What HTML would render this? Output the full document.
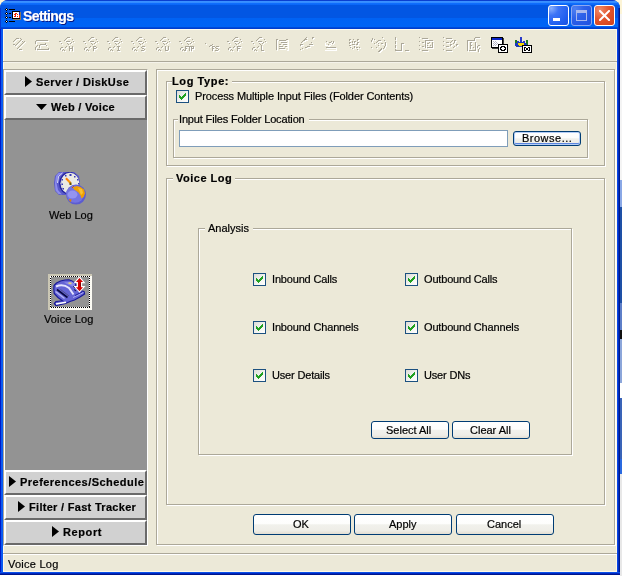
<!DOCTYPE html>
<html><head><meta charset="utf-8">
<style>
*{margin:0;padding:0;box-sizing:border-box}
html,body{width:622px;height:576px;overflow:hidden;background:#fff}
body{position:relative;font-family:"Liberation Sans",sans-serif;font-size:11px;color:#000;-webkit-text-stroke-width:0.2px}
.a{position:absolute}
.t{position:absolute;white-space:nowrap;line-height:15px;font-size:11px;will-change:transform}
.b{font-weight:bold}
.etch{position:absolute;border:1px solid #ACA899;box-shadow:inset 1px 1px 0 #fff,1px 1px 0 #fff}
.lbl{position:absolute;background:#ECE9D8;white-space:nowrap;line-height:15px;will-change:transform}
.btn{position:absolute;border:1px solid #003C74;border-radius:3px;background:linear-gradient(#fff 0%,#fdfdfc 45%,#f1f1ec 52%,#eeede7 82%,#e2ded2 100%);text-align:center;line-height:13px}
.cb{position:absolute;width:13px;height:13px;border:1px solid #1C5180;background:linear-gradient(135deg,#dcdcd7 0%,#f5f5f2 60%,#fff 100%)}
.cb svg{position:absolute;left:2px;top:2px}
.lb{position:absolute;left:4px;width:143px;height:25px;background:#D1D1D1;border-top:2px solid #fff;border-left:2px solid #fff;border-right:2px solid #6A6A6A;border-bottom:2px solid #6A6A6A;font-weight:bold}
.tb{position:absolute;top:36px;width:17px;height:17px}
</style></head><body>
<!-- outside background -->
<div class="a" style="left:0;top:0;width:622px;height:576px;background:#fff"></div>
<div class="a" style="left:0;top:0;width:14px;height:14px;background:#FCF4D6"></div>
<div class="a" style="left:606px;top:0;width:16px;height:14px;background:#FCF4D6"></div>
<!-- right strip outside window -->
<div class="a" style="left:620px;top:14px;width:2px;height:166px;background:#F4F4F4"></div>
<div class="a" style="left:620px;top:180px;width:2px;height:27px;background:#8AA8E6"></div>
<div class="a" style="left:620px;top:207px;width:2px;height:96px;background:#1E50A6"></div>
<div class="a" style="left:620px;top:303px;width:2px;height:27px;background:#5E7FC8"></div>
<div class="a" style="left:620px;top:330px;width:2px;height:9px;background:#101010"></div>
<div class="a" style="left:620px;top:339px;width:2px;height:44px;background:#8CA6DA"></div>
<div class="a" style="left:620px;top:383px;width:2px;height:15px;background:#FFFFFF"></div>
<div class="a" style="left:620px;top:398px;width:2px;height:61px;background:#3A64B8"></div>
<div class="a" style="left:620px;top:459px;width:2px;height:15px;background:#2A6AE0"></div>
<div class="a" style="left:620px;top:474px;width:2px;height:102px;background:#E8E8E8"></div>

<!-- window frame -->
<div class="a" style="left:0;top:0;width:620px;height:575px;border-radius:8px 8px 0 0;background:#0A4BE0;overflow:hidden">
  <div class="a" style="left:0;top:0;width:620px;height:29px;background:linear-gradient(#0A3FD0 0px,#0A3FD0 1px,#3D93FF 1px,#3189FF 3px,#1170FF 3px,#0865F5 5px,#0256E3 5px,#0256E3 18px,#0062F4 18px,#0064F6 27px,#0050E0 27px,#0037C8 29px)"></div>
  <div class="a" style="left:0;top:29px;width:1px;height:546px;background:#0019C8"></div>
  <div class="a" style="left:1px;top:29px;width:2px;height:546px;background:#0A5AF0"></div>
  <div class="a" style="left:0;top:8px;width:1px;height:21px;background:#0838D0"></div>
  <div class="a" style="left:617px;top:29px;width:1px;height:546px;background:#0A45E5"></div>
  <div class="a" style="left:618px;top:8px;width:1px;height:567px;background:#0030C0"></div>
  <div class="a" style="left:619px;top:8px;width:1px;height:567px;background:#00188C"></div>
  <div class="a" style="left:0;top:572px;width:620px;height:1px;background:#0A50E8"></div>
  <div class="a" style="left:0;top:573px;width:620px;height:1px;background:#0028C0"></div>
  <div class="a" style="left:0;top:574px;width:620px;height:1px;background:#00158A"></div>
</div>

<!-- client area -->
<div class="a" style="left:3px;top:29px;width:614px;height:543px;background:#ECE9D8">
  <div class="a" style="left:0;top:0;width:614px;height:1px;background:#FFFCF2"></div>
  <div class="a" style="left:0;top:0;width:1px;height:543px;background:#FFF8E6"></div>
  <div class="a" style="left:613px;top:0;width:1px;height:543px;background:#FFF8E6"></div>
  <div class="a" style="left:0;top:542px;width:614px;height:1px;background:#FFF8E6"></div>
</div>

<!-- title -->
<svg class="a" style="left:0;top:0" width="24" height="26" shape-rendering="crispEdges">
<g fill="#000"><path d="M6 8h1v1h-1zM5 9h1v1h-1zM7 9h1v1h-1zM6 10h1v1h-1z"/><path d="M6 12h1v1h-1zM5 13h1v1h-1zM7 13h1v1h-1zM6 14h1v1h-1z"/><path d="M6 16h1v1h-1zM5 17h1v1h-1zM7 17h1v1h-1zM6 18h1v1h-1z"/><path d="M6 20h1v1h-1zM5 21h1v1h-1zM7 21h1v1h-1zM6 22h1v1h-1z"/>
<rect x="9" y="9" width="6" height="1"/><rect x="9" y="13" width="2" height="1"/><rect x="9" y="17" width="2" height="1"/><rect x="9" y="21" width="6" height="1"/></g>
<g fill="#fff"><rect x="6" y="9" width="1" height="1"/><rect x="6" y="13" width="1" height="1"/><rect x="6" y="17" width="1" height="1"/><rect x="6" y="21" width="1" height="1"/></g>
<rect x="13" y="12" width="8" height="8" fill="#8A7A60"/>
<rect x="12" y="11" width="8" height="8" fill="#000"/>
<rect x="13" y="12" width="6" height="6" fill="#fff"/>
<rect x="19" y="12" width="1" height="3" fill="#1020B0"/><rect x="19" y="15" width="1" height="3" fill="#FF3000"/>
<g fill="#F02000"><rect x="14" y="14" width="2" height="1"/><rect x="15" y="13" width="2" height="1"/><rect x="17" y="14" width="1" height="1"/><rect x="15" y="15" width="1" height="2"/><rect x="17" y="16" width="1" height="1"/><rect x="14" y="16" width="1" height="1"/></g>
</svg>
<div class="t b" style="left:23px;top:8px;font-size:14px;line-height:16px;letter-spacing:-0.6px;color:#fff;text-shadow:1px 1px 0 #0A1883">Settings</div>

<!-- window buttons -->
<div class="a" style="left:548px;top:5px;width:21px;height:21px;border:1px solid #fff;border-radius:3px;background:radial-gradient(circle at 12% 12%,#8AB0FC 0%,#3D74F6 30%,#2260F0 70%,#1A50E0 100%)">
  <div class="a" style="left:4px;top:12px;width:7px;height:3px;background:#fff"></div>
</div>
<div class="a" style="left:571px;top:5px;width:21px;height:21px;border:1px solid #8CA8F2;border-radius:3px;background:radial-gradient(circle at 15% 15%,#4E80F2 0%,#2E62EA 40%,#2050E0 100%)">
  <div class="a" style="left:4px;top:4px;width:11px;height:11px;border:1px solid #A8B8EE;border-top-width:3px"></div>
</div>
<div class="a" style="left:594px;top:5px;width:21px;height:21px;border:1px solid #fff;border-radius:3px;background:radial-gradient(circle at 25% 20%,#F08C6A 0%,#E2552E 45%,#D0401A 100%)">
  <svg class="a" style="left:4px;top:4px" width="11" height="11" viewBox="0 0 11 11"><path d="M1 1L10 10M10 1L1 10" stroke="#fff" stroke-width="2" stroke-linecap="square"/></svg>
</div>

<svg class="a" style="left:0;top:0" width="622" height="62" shape-rendering="crispEdges"><path fill="#fff" d="M68 38h3v1h-3zM92 38h3v1h-3zM116 38h3v1h-3zM140 38h3v1h-3zM164 38h3v1h-3zM188 38h3v1h-3zM236 38h3v1h-3zM260 38h3v1h-3zM307 38h1v1h-1zM313 38h2v1h-2zM383 38h1v1h-1zM396 38h1v1h-1zM420 38h1v1h-1zM444 38h1v1h-1zM476 38h5v1h-5zM17 39h3v1h-3zM67 39h1v1h-1zM91 39h1v1h-1zM115 39h1v1h-1zM139 39h1v1h-1zM163 39h1v1h-1zM187 39h1v1h-1zM235 39h1v1h-1zM259 39h1v1h-1zM313 39h1v1h-1zM373 39h1v1h-1zM396 39h1v1h-1zM423 39h6v1h-6zM447 39h6v1h-6zM475 39h1v1h-1zM16 40h1v1h-1zM22 40h1v1h-1zM66 40h1v1h-1zM73 40h1v1h-1zM90 40h1v1h-1zM97 40h1v1h-1zM114 40h1v1h-1zM121 40h1v1h-1zM138 40h1v1h-1zM145 40h1v1h-1zM162 40h1v1h-1zM169 40h1v1h-1zM186 40h1v1h-1zM193 40h1v1h-1zM234 40h1v1h-1zM241 40h1v1h-1zM258 40h1v1h-1zM265 40h1v1h-1zM277 40h2v1h-2zM287 40h2v1h-2zM305 40h3v1h-3zM350 40h2v1h-2zM354 40h1v1h-1zM358 40h2v1h-2zM373 40h1v1h-1zM375 40h1v1h-1zM396 40h1v1h-1zM475 40h1v1h-1zM15 41h1v1h-1zM21 41h1v1h-1zM37 41h12v1h-12zM65 41h1v1h-1zM89 41h1v1h-1zM113 41h1v1h-1zM137 41h1v1h-1zM161 41h1v1h-1zM185 41h1v1h-1zM233 41h1v1h-1zM257 41h1v1h-1zM277 41h1v1h-1zM280 41h7v1h-7zM288 41h1v1h-1zM304 41h2v1h-2zM350 41h1v1h-1zM358 41h1v1h-1zM372 41h1v1h-1zM379 41h3v1h-3zM385 41h1v1h-1zM426 41h8v1h-8zM453 41h1v1h-1zM455 41h2v1h-2zM468 41h8v1h-8zM14 42h1v1h-1zM20 42h1v1h-1zM25 42h1v1h-1zM36 42h1v1h-1zM60 42h2v1h-2zM67 42h4v1h-4zM74 42h1v1h-1zM84 42h2v1h-2zM91 42h4v1h-4zM98 42h1v1h-1zM108 42h2v1h-2zM115 42h4v1h-4zM122 42h1v1h-1zM132 42h2v1h-2zM139 42h4v1h-4zM146 42h1v1h-1zM156 42h2v1h-2zM163 42h4v1h-4zM170 42h1v1h-1zM180 42h2v1h-2zM187 42h4v1h-4zM194 42h1v1h-1zM228 42h2v1h-2zM235 42h4v1h-4zM242 42h1v1h-1zM252 42h2v1h-2zM259 42h4v1h-4zM266 42h1v1h-1zM277 42h1v1h-1zM288 42h1v1h-1zM303 42h1v1h-1zM327 42h1v1h-1zM332 42h1v1h-1zM334 42h1v1h-1zM353 42h1v1h-1zM355 42h2v1h-2zM372 42h1v1h-1zM378 42h1v1h-1zM396 42h1v1h-1zM420 42h1v1h-1zM426 42h1v1h-1zM444 42h1v1h-1zM452 42h1v1h-1zM455 42h1v1h-1zM468 42h1v1h-1zM19 43h1v1h-1zM24 43h1v1h-1zM36 43h1v1h-1zM72 43h1v1h-1zM96 43h1v1h-1zM120 43h1v1h-1zM144 43h1v1h-1zM168 43h1v1h-1zM192 43h1v1h-1zM240 43h1v1h-1zM264 43h1v1h-1zM277 43h1v1h-1zM282 43h7v1h-7zM302 43h1v1h-1zM312 43h1v1h-1zM325 43h1v1h-1zM330 43h2v1h-2zM334 43h1v1h-1zM350 43h2v1h-2zM353 43h1v1h-1zM355 43h1v1h-1zM358 43h2v1h-2zM377 43h1v1h-1zM386 43h1v1h-1zM396 43h1v1h-1zM423 43h2v1h-2zM426 43h1v1h-1zM430 43h1v1h-1zM433 43h1v1h-1zM447 43h3v1h-3zM451 43h1v1h-1zM455 43h1v1h-1zM468 43h1v1h-1zM471 43h2v1h-2zM476 43h1v1h-1zM18 44h1v1h-1zM23 44h1v1h-1zM36 44h1v1h-1zM46 44h1v1h-1zM62 44h1v1h-1zM71 44h1v1h-1zM86 44h1v1h-1zM95 44h1v1h-1zM110 44h1v1h-1zM119 44h1v1h-1zM134 44h1v1h-1zM143 44h1v1h-1zM158 44h1v1h-1zM167 44h1v1h-1zM182 44h1v1h-1zM191 44h1v1h-1zM206 44h1v1h-1zM230 44h1v1h-1zM239 44h1v1h-1zM254 44h1v1h-1zM263 44h1v1h-1zM277 44h1v1h-1zM288 44h1v1h-1zM325 44h1v1h-1zM331 44h1v1h-1zM333 44h1v1h-1zM350 44h1v1h-1zM358 44h1v1h-1zM375 44h1v1h-1zM379 44h1v1h-1zM382 44h2v1h-2zM386 44h1v1h-1zM396 44h1v1h-1zM402 44h3v1h-3zM426 44h1v1h-1zM428 44h2v1h-2zM433 44h1v1h-1zM454 44h1v1h-1zM468 44h1v1h-1zM471 44h1v1h-1zM476 44h1v1h-1zM14 45h1v1h-1zM17 45h1v1h-1zM22 45h1v1h-1zM41 45h5v1h-5zM69 45h1v1h-1zM93 45h1v1h-1zM117 45h1v1h-1zM141 45h1v1h-1zM165 45h1v1h-1zM189 45h1v1h-1zM213 45h1v1h-1zM237 45h1v1h-1zM277 45h1v1h-1zM280 45h2v1h-2zM284 45h5v1h-5zM301 45h3v1h-3zM310 45h4v1h-4zM325 45h3v1h-3zM329 45h2v1h-2zM353 45h3v1h-3zM357 45h2v1h-2zM386 45h1v1h-1zM402 45h1v1h-1zM426 45h1v1h-1zM433 45h1v1h-1zM451 45h2v1h-2zM457 45h2v1h-2zM468 45h1v1h-1zM476 45h1v1h-1zM16 46h1v1h-1zM21 46h1v1h-1zM38 46h1v1h-1zM40 46h1v1h-1zM47 46h1v1h-1zM211 46h1v1h-1zM262 46h1v1h-1zM277 46h1v1h-1zM288 46h1v1h-1zM301 46h1v1h-1zM328 46h2v1h-2zM350 46h2v1h-2zM379 46h1v1h-1zM386 46h1v1h-1zM396 46h1v1h-1zM402 46h1v1h-1zM420 46h1v1h-1zM426 46h1v1h-1zM428 46h1v1h-1zM431 46h1v1h-1zM433 46h1v1h-1zM444 46h1v1h-1zM451 46h1v1h-1zM457 46h1v1h-1zM468 46h1v1h-1zM471 46h2v1h-2zM476 46h1v1h-1zM479 46h2v1h-2zM20 47h1v1h-1zM37 47h1v1h-1zM40 47h1v1h-1zM67 47h1v1h-1zM70 47h1v1h-1zM73 47h1v1h-1zM91 47h1v1h-1zM94 47h2v1h-2zM115 47h1v1h-1zM119 47h2v1h-2zM139 47h1v1h-1zM143 47h3v1h-3zM163 47h1v1h-1zM166 47h1v1h-1zM169 47h1v1h-1zM186 47h3v1h-3zM190 47h1v1h-1zM192 47h1v1h-1zM194 47h1v1h-1zM210 47h1v1h-1zM213 47h2v1h-2zM217 47h3v1h-3zM235 47h1v1h-1zM238 47h4v1h-4zM259 47h1v1h-1zM262 47h1v1h-1zM277 47h1v1h-1zM280 47h4v1h-4zM286 47h3v1h-3zM308 47h3v1h-3zM355 47h1v1h-1zM385 47h1v1h-1zM396 47h1v1h-1zM402 47h1v1h-1zM423 47h2v1h-2zM426 47h1v1h-1zM433 47h1v1h-1zM447 47h3v1h-3zM455 47h1v1h-1zM468 47h1v1h-1zM471 47h1v1h-1zM476 47h1v1h-1zM478 47h1v1h-1zM19 48h1v1h-1zM36 48h1v1h-1zM40 48h1v1h-1zM62 48h2v1h-2zM66 48h1v1h-1zM73 48h1v1h-1zM86 48h2v1h-2zM90 48h1v1h-1zM97 48h1v1h-1zM110 48h2v1h-2zM114 48h1v1h-1zM119 48h1v1h-1zM134 48h2v1h-2zM138 48h1v1h-1zM158 48h2v1h-2zM162 48h1v1h-1zM166 48h1v1h-1zM169 48h1v1h-1zM182 48h2v1h-2zM190 48h1v1h-1zM194 48h1v1h-1zM230 48h2v1h-2zM234 48h1v1h-1zM254 48h2v1h-2zM258 48h1v1h-1zM262 48h1v1h-1zM277 48h1v1h-1zM288 48h1v1h-1zM306 48h2v1h-2zM327 48h10v1h-10zM351 48h1v1h-1zM355 48h1v1h-1zM357 48h2v1h-2zM360 48h1v1h-1zM372 48h1v1h-1zM377 48h1v1h-1zM385 48h1v1h-1zM396 48h1v1h-1zM402 48h1v1h-1zM426 48h1v1h-1zM428 48h6v1h-6zM454 48h1v1h-1zM468 48h1v1h-1zM471 48h1v1h-1zM474 48h1v1h-1zM476 48h1v1h-1zM478 48h1v1h-1zM18 49h1v1h-1zM36 49h1v1h-1zM49 49h1v1h-1zM61 49h1v1h-1zM70 49h2v1h-2zM73 49h1v1h-1zM85 49h1v1h-1zM94 49h3v1h-3zM109 49h1v1h-1zM119 49h1v1h-1zM133 49h1v1h-1zM143 49h1v1h-1zM157 49h1v1h-1zM166 49h1v1h-1zM169 49h1v1h-1zM181 49h1v1h-1zM186 49h2v1h-2zM190 49h1v1h-1zM192 49h3v1h-3zM213 49h2v1h-2zM217 49h1v1h-1zM229 49h1v1h-1zM238 49h3v1h-3zM253 49h1v1h-1zM262 49h1v1h-1zM277 49h1v1h-1zM280 49h6v1h-6zM288 49h1v1h-1zM303 49h1v1h-1zM336 49h1v1h-1zM353 49h1v1h-1zM382 49h1v1h-1zM384 49h1v1h-1zM402 49h1v1h-1zM468 49h1v1h-1zM471 49h1v1h-1zM476 49h1v1h-1zM480 49h1v1h-1zM20 50h3v1h-3zM36 50h1v1h-1zM38 50h12v1h-12zM61 50h1v1h-1zM70 50h1v1h-1zM73 50h1v1h-1zM85 50h1v1h-1zM94 50h1v1h-1zM109 50h1v1h-1zM133 50h1v1h-1zM145 50h1v1h-1zM157 50h1v1h-1zM169 50h1v1h-1zM181 50h1v1h-1zM186 50h1v1h-1zM190 50h1v1h-1zM192 50h1v1h-1zM213 50h1v1h-1zM219 50h1v1h-1zM229 50h1v1h-1zM238 50h1v1h-1zM253 50h1v1h-1zM277 50h1v1h-1zM287 50h2v1h-2zM301 50h1v1h-1zM325 50h12v1h-12zM358 50h1v1h-1zM381 50h2v1h-2zM402 50h1v1h-1zM420 50h1v1h-1zM444 50h1v1h-1zM468 50h1v1h-1zM476 50h1v1h-1zM479 50h1v1h-1zM63 51h1v1h-1zM65 51h1v1h-1zM70 51h1v1h-1zM73 51h1v1h-1zM87 51h1v1h-1zM89 51h1v1h-1zM94 51h1v1h-1zM111 51h1v1h-1zM113 51h1v1h-1zM118 51h3v1h-3zM135 51h1v1h-1zM137 51h1v1h-1zM142 51h3v1h-3zM159 51h1v1h-1zM161 51h1v1h-1zM166 51h3v1h-3zM183 51h1v1h-1zM185 51h2v1h-2zM190 51h1v1h-1zM192 51h1v1h-1zM213 51h1v1h-1zM216 51h3v1h-3zM231 51h1v1h-1zM233 51h1v1h-1zM238 51h1v1h-1zM255 51h1v1h-1zM257 51h1v1h-1zM262 51h3v1h-3zM380 51h2v1h-2zM396 51h7v1h-7zM406 51h4v1h-4zM423 51h6v1h-6zM447 51h6v1h-6zM468 51h1v1h-1zM470 51h7v1h-7zM479 51h1v1h-1zM379 52h2v1h-2zM479 52h1v1h-1z"/><path fill="#ACA899" d="M67 37h3v1h-3zM91 37h3v1h-3zM115 37h3v1h-3zM139 37h3v1h-3zM163 37h3v1h-3zM187 37h3v1h-3zM235 37h3v1h-3zM259 37h3v1h-3zM306 37h1v1h-1zM312 37h2v1h-2zM382 37h1v1h-1zM395 37h1v1h-1zM419 37h1v1h-1zM443 37h1v1h-1zM475 37h5v1h-5zM16 38h3v1h-3zM20 38h1v1h-1zM66 38h1v1h-1zM90 38h1v1h-1zM114 38h1v1h-1zM138 38h1v1h-1zM162 38h1v1h-1zM186 38h1v1h-1zM234 38h1v1h-1zM258 38h1v1h-1zM305 38h1v1h-1zM312 38h1v1h-1zM372 38h1v1h-1zM395 38h1v1h-1zM422 38h6v1h-6zM446 38h6v1h-6zM474 38h1v1h-1zM15 39h1v1h-1zM21 39h1v1h-1zM65 39h1v1h-1zM72 39h1v1h-1zM89 39h1v1h-1zM96 39h1v1h-1zM113 39h1v1h-1zM120 39h1v1h-1zM137 39h1v1h-1zM144 39h1v1h-1zM161 39h1v1h-1zM168 39h1v1h-1zM185 39h1v1h-1zM192 39h1v1h-1zM233 39h1v1h-1zM240 39h1v1h-1zM257 39h1v1h-1zM264 39h1v1h-1zM276 39h2v1h-2zM286 39h2v1h-2zM304 39h3v1h-3zM349 39h2v1h-2zM353 39h1v1h-1zM357 39h2v1h-2zM372 39h1v1h-1zM374 39h1v1h-1zM395 39h1v1h-1zM474 39h1v1h-1zM14 40h1v1h-1zM20 40h1v1h-1zM36 40h12v1h-12zM64 40h1v1h-1zM88 40h1v1h-1zM112 40h1v1h-1zM136 40h1v1h-1zM160 40h1v1h-1zM184 40h1v1h-1zM232 40h1v1h-1zM256 40h1v1h-1zM276 40h1v1h-1zM279 40h7v1h-7zM303 40h2v1h-2zM349 40h1v1h-1zM357 40h1v1h-1zM371 40h1v1h-1zM378 40h3v1h-3zM384 40h1v1h-1zM425 40h8v1h-8zM452 40h1v1h-1zM454 40h2v1h-2zM467 40h8v1h-8zM13 41h1v1h-1zM19 41h1v1h-1zM22 41h1v1h-1zM24 41h1v1h-1zM35 41h1v1h-1zM59 41h2v1h-2zM66 41h4v1h-4zM73 41h1v1h-1zM83 41h2v1h-2zM90 41h4v1h-4zM97 41h1v1h-1zM107 41h2v1h-2zM114 41h4v1h-4zM121 41h1v1h-1zM131 41h2v1h-2zM138 41h4v1h-4zM145 41h1v1h-1zM155 41h2v1h-2zM162 41h4v1h-4zM169 41h1v1h-1zM179 41h2v1h-2zM186 41h4v1h-4zM193 41h1v1h-1zM227 41h2v1h-2zM234 41h4v1h-4zM241 41h1v1h-1zM251 41h2v1h-2zM258 41h4v1h-4zM265 41h1v1h-1zM276 41h1v1h-1zM302 41h1v1h-1zM326 41h1v1h-1zM331 41h1v1h-1zM333 41h1v1h-1zM352 41h1v1h-1zM354 41h2v1h-2zM371 41h1v1h-1zM377 41h1v1h-1zM395 41h1v1h-1zM419 41h1v1h-1zM425 41h1v1h-1zM443 41h1v1h-1zM451 41h1v1h-1zM454 41h1v1h-1zM467 41h1v1h-1zM18 42h1v1h-1zM23 42h1v1h-1zM35 42h1v1h-1zM71 42h1v1h-1zM95 42h1v1h-1zM119 42h1v1h-1zM143 42h1v1h-1zM167 42h1v1h-1zM191 42h1v1h-1zM239 42h1v1h-1zM263 42h1v1h-1zM276 42h1v1h-1zM281 42h6v1h-6zM301 42h1v1h-1zM311 42h1v1h-1zM329 42h2v1h-2zM333 42h1v1h-1zM349 42h2v1h-2zM352 42h1v1h-1zM354 42h1v1h-1zM357 42h2v1h-2zM376 42h1v1h-1zM385 42h1v1h-1zM395 42h1v1h-1zM422 42h2v1h-2zM425 42h1v1h-1zM429 42h1v1h-1zM432 42h1v1h-1zM446 42h3v1h-3zM450 42h1v1h-1zM454 42h1v1h-1zM467 42h1v1h-1zM470 42h2v1h-2zM475 42h1v1h-1zM17 43h1v1h-1zM22 43h1v1h-1zM35 43h1v1h-1zM45 43h1v1h-1zM61 43h1v1h-1zM67 43h1v1h-1zM70 43h1v1h-1zM85 43h1v1h-1zM91 43h1v1h-1zM94 43h1v1h-1zM109 43h1v1h-1zM115 43h1v1h-1zM118 43h1v1h-1zM133 43h1v1h-1zM139 43h1v1h-1zM142 43h1v1h-1zM157 43h1v1h-1zM163 43h1v1h-1zM166 43h1v1h-1zM181 43h1v1h-1zM187 43h1v1h-1zM190 43h1v1h-1zM205 43h1v1h-1zM229 43h1v1h-1zM235 43h1v1h-1zM238 43h1v1h-1zM253 43h1v1h-1zM259 43h1v1h-1zM262 43h1v1h-1zM276 43h1v1h-1zM332 43h1v1h-1zM349 43h1v1h-1zM357 43h1v1h-1zM374 43h1v1h-1zM378 43h1v1h-1zM381 43h2v1h-2zM385 43h1v1h-1zM395 43h1v1h-1zM401 43h3v1h-3zM425 43h1v1h-1zM427 43h2v1h-2zM432 43h1v1h-1zM453 43h1v1h-1zM467 43h1v1h-1zM470 43h1v1h-1zM475 43h1v1h-1zM13 44h2v1h-2zM16 44h1v1h-1zM21 44h1v1h-1zM40 44h6v1h-6zM68 44h1v1h-1zM92 44h1v1h-1zM116 44h1v1h-1zM140 44h1v1h-1zM164 44h1v1h-1zM188 44h1v1h-1zM212 44h1v1h-1zM236 44h1v1h-1zM260 44h1v1h-1zM276 44h1v1h-1zM279 44h2v1h-2zM283 44h4v1h-4zM300 44h3v1h-3zM309 44h4v1h-4zM328 44h1v1h-1zM352 44h3v1h-3zM356 44h2v1h-2zM385 44h1v1h-1zM401 44h1v1h-1zM425 44h1v1h-1zM432 44h1v1h-1zM450 44h2v1h-2zM456 44h2v1h-2zM467 44h1v1h-1zM470 44h1v1h-1zM475 44h1v1h-1zM15 45h1v1h-1zM20 45h1v1h-1zM37 45h1v1h-1zM39 45h1v1h-1zM46 45h1v1h-1zM210 45h2v1h-2zM261 45h1v1h-1zM276 45h1v1h-1zM300 45h1v1h-1zM349 45h2v1h-2zM378 45h1v1h-1zM385 45h1v1h-1zM395 45h1v1h-1zM401 45h1v1h-1zM419 45h1v1h-1zM425 45h1v1h-1zM427 45h1v1h-1zM430 45h1v1h-1zM432 45h1v1h-1zM443 45h1v1h-1zM450 45h1v1h-1zM456 45h1v1h-1zM467 45h1v1h-1zM470 45h2v1h-2zM475 45h1v1h-1zM478 45h2v1h-2zM19 46h1v1h-1zM36 46h1v1h-1zM39 46h1v1h-1zM66 46h1v1h-1zM69 46h1v1h-1zM72 46h1v1h-1zM90 46h1v1h-1zM93 46h3v1h-3zM114 46h1v1h-1zM117 46h3v1h-3zM138 46h1v1h-1zM142 46h3v1h-3zM162 46h1v1h-1zM165 46h1v1h-1zM168 46h1v1h-1zM185 46h9v1h-9zM209 46h1v1h-1zM212 46h3v1h-3zM216 46h3v1h-3zM234 46h1v1h-1zM237 46h4v1h-4zM258 46h1v1h-1zM261 46h1v1h-1zM276 46h1v1h-1zM279 46h4v1h-4zM285 46h2v1h-2zM307 46h3v1h-3zM354 46h1v1h-1zM384 46h1v1h-1zM395 46h1v1h-1zM401 46h1v1h-1zM422 46h2v1h-2zM425 46h1v1h-1zM432 46h1v1h-1zM446 46h3v1h-3zM454 46h1v1h-1zM467 46h1v1h-1zM470 46h1v1h-1zM475 46h1v1h-1zM477 46h1v1h-1zM18 47h1v1h-1zM35 47h1v1h-1zM39 47h1v1h-1zM61 47h2v1h-2zM65 47h1v1h-1zM69 47h1v1h-1zM72 47h1v1h-1zM85 47h2v1h-2zM89 47h1v1h-1zM93 47h1v1h-1zM96 47h1v1h-1zM109 47h2v1h-2zM113 47h1v1h-1zM118 47h1v1h-1zM133 47h2v1h-2zM137 47h1v1h-1zM141 47h1v1h-1zM157 47h2v1h-2zM161 47h1v1h-1zM165 47h1v1h-1zM168 47h1v1h-1zM181 47h2v1h-2zM185 47h1v1h-1zM189 47h1v1h-1zM191 47h1v1h-1zM193 47h1v1h-1zM212 47h1v1h-1zM215 47h1v1h-1zM229 47h2v1h-2zM233 47h1v1h-1zM237 47h1v1h-1zM253 47h2v1h-2zM257 47h1v1h-1zM261 47h1v1h-1zM276 47h1v1h-1zM305 47h2v1h-2zM326 47h10v1h-10zM350 47h1v1h-1zM354 47h1v1h-1zM356 47h2v1h-2zM359 47h1v1h-1zM371 47h1v1h-1zM376 47h1v1h-1zM384 47h1v1h-1zM395 47h1v1h-1zM401 47h1v1h-1zM425 47h1v1h-1zM427 47h6v1h-6zM453 47h1v1h-1zM467 47h1v1h-1zM470 47h1v1h-1zM473 47h1v1h-1zM475 47h1v1h-1zM477 47h1v1h-1zM17 48h1v1h-1zM35 48h1v1h-1zM48 48h1v1h-1zM60 48h1v1h-1zM69 48h4v1h-4zM84 48h1v1h-1zM93 48h3v1h-3zM108 48h1v1h-1zM118 48h1v1h-1zM132 48h1v1h-1zM142 48h2v1h-2zM156 48h1v1h-1zM165 48h1v1h-1zM168 48h1v1h-1zM180 48h1v1h-1zM185 48h2v1h-2zM189 48h1v1h-1zM191 48h3v1h-3zM212 48h2v1h-2zM216 48h2v1h-2zM228 48h1v1h-1zM237 48h3v1h-3zM252 48h1v1h-1zM261 48h1v1h-1zM276 48h1v1h-1zM279 48h6v1h-6zM302 48h1v1h-1zM352 48h1v1h-1zM381 48h1v1h-1zM383 48h1v1h-1zM401 48h1v1h-1zM467 48h1v1h-1zM470 48h1v1h-1zM475 48h1v1h-1zM479 48h1v1h-1zM19 49h3v1h-3zM35 49h1v1h-1zM37 49h12v1h-12zM60 49h1v1h-1zM63 49h1v1h-1zM69 49h1v1h-1zM72 49h1v1h-1zM84 49h1v1h-1zM87 49h1v1h-1zM93 49h1v1h-1zM108 49h1v1h-1zM111 49h1v1h-1zM118 49h1v1h-1zM132 49h1v1h-1zM135 49h1v1h-1zM144 49h1v1h-1zM156 49h1v1h-1zM159 49h1v1h-1zM165 49h1v1h-1zM168 49h1v1h-1zM180 49h1v1h-1zM183 49h1v1h-1zM185 49h1v1h-1zM189 49h1v1h-1zM191 49h1v1h-1zM212 49h1v1h-1zM218 49h1v1h-1zM228 49h1v1h-1zM231 49h1v1h-1zM237 49h1v1h-1zM252 49h1v1h-1zM255 49h1v1h-1zM261 49h1v1h-1zM276 49h1v1h-1zM300 49h1v1h-1zM357 49h1v1h-1zM380 49h2v1h-2zM395 49h1v1h-1zM401 49h1v1h-1zM419 49h1v1h-1zM443 49h1v1h-1zM467 49h1v1h-1zM475 49h1v1h-1zM478 49h1v1h-1zM62 50h1v1h-1zM64 50h1v1h-1zM69 50h1v1h-1zM72 50h1v1h-1zM86 50h1v1h-1zM88 50h1v1h-1zM93 50h1v1h-1zM110 50h1v1h-1zM112 50h1v1h-1zM117 50h3v1h-3zM134 50h1v1h-1zM136 50h1v1h-1zM141 50h3v1h-3zM158 50h1v1h-1zM160 50h1v1h-1zM165 50h3v1h-3zM182 50h1v1h-1zM184 50h2v1h-2zM189 50h1v1h-1zM191 50h1v1h-1zM212 50h1v1h-1zM215 50h3v1h-3zM230 50h1v1h-1zM232 50h1v1h-1zM237 50h1v1h-1zM254 50h1v1h-1zM256 50h1v1h-1zM261 50h3v1h-3zM379 50h2v1h-2zM395 50h7v1h-7zM405 50h4v1h-4zM422 50h6v1h-6zM446 50h6v1h-6zM467 50h1v1h-1zM469 50h7v1h-7zM478 50h1v1h-1zM378 51h2v1h-2zM478 51h1v1h-1z"/><g>
<rect x="491" y="37" width="12" height="11" fill="#000"/>
<rect x="492" y="38" width="10" height="2" fill="#0A24C8"/>
<rect x="492" y="40" width="10" height="7" fill="#fff"/>
<path fill="#B8B8C8" d="M493 41h1v1h-1zM495 41h1v1h-1zM494 42h1v1h-1zM496 42h1v1h-1zM493 43h1v1h-1zM495 43h1v1h-1zM497 43h1v1h-1zM494 44h1v1h-1zM496 44h1v1h-1zM493 45h1v1h-1zM495 45h1v1h-1z"/>
<rect x="503" y="38" width="1" height="11" fill="#404040"/><rect x="492" y="48" width="12" height="1" fill="#404040"/>
<rect x="498" y="44" width="10" height="9" fill="#000"/>
<rect x="499" y="45" width="8" height="7" fill="#fff"/>
<rect x="500" y="46" width="6" height="5" fill="#000"/>
<rect x="502" y="47" width="2" height="3" fill="#fff"/><rect x="501" y="48" width="4" height="1" fill="#fff"/>
<rect x="500" y="46" width="1" height="1" fill="#fff"/><rect x="505" y="46" width="1" height="1" fill="#fff"/><rect x="500" y="50" width="1" height="1" fill="#fff"/><rect x="505" y="50" width="1" height="1" fill="#fff"/>
</g>
<g>
<path fill="#1E7A1E" d="M515 40h2v5h-2zM526 40h2v5h-2z"/>
<path fill="#2A3AC8" d="M520 37h2v6h-2zM517 41h2v3h-2zM523 41h2v3h-2z"/>
<ellipse cx="521" cy="44.5" rx="6" ry="2.5" fill="#1838C0"/>
<ellipse cx="521" cy="44.5" rx="3.5" ry="1.3" fill="#F8D800"/>
<rect x="516" y="46" width="10" height="1" fill="#2040B0"/>
<rect x="522" y="45" width="10" height="8" fill="#000"/>
<rect x="523" y="46" width="8" height="6" fill="#fff"/>
<rect x="524" y="47" width="6" height="4" fill="#000"/>
<rect x="526" y="47" width="2" height="4" fill="#fff"/><rect x="525" y="48" width="4" height="2" fill="#fff"/>
<rect x="526" y="48" width="2" height="2" fill="#000"/>
</g></svg>
<!-- toolbar separator -->
<div class="a" style="left:3px;top:61px;width:614px;height:1px;background:#ACA899"></div>
<div class="a" style="left:3px;top:62px;width:614px;height:1px;background:#F5F3EA"></div>

<!-- LEFT PANEL -->
<div class="a" style="left:3px;top:69px;width:145px;height:477px;border-top:1px solid #ACA899;border-left:1px solid #ACA899;border-right:1px solid #fff;border-bottom:1px solid #fff"></div>
<div class="a" style="left:4px;top:120px;width:143px;height:350px;background:#939393;border-left:1px solid #fff"></div>
<div class="lb" style="top:70px"></div>
<div class="lb" style="top:95px"></div>
<div class="lb" style="top:470px"></div>
<div class="lb" style="top:495px"></div>
<div class="lb" style="top:520px"></div>
<!-- triangles -->
<svg class="a" style="left:25px;top:76px" width="7" height="11"><path d="M0 0L7 5.5L0 11Z" fill="#000"/></svg>
<svg class="a" style="left:36px;top:104px" width="11" height="6"><path d="M0 0L11 0L5.5 6Z" fill="#000"/></svg>
<svg class="a" style="left:9px;top:476px" width="7" height="11"><path d="M0 0L7 5.5L0 11Z" fill="#000"/></svg>
<svg class="a" style="left:18px;top:501px" width="7" height="11"><path d="M0 0L7 5.5L0 11Z" fill="#000"/></svg>
<svg class="a" style="left:52px;top:526px" width="7" height="11"><path d="M0 0L7 5.5L0 11Z" fill="#000"/></svg>
<div class="t b" style="left:36px;top:75px;letter-spacing:0.4px">Server / DiskUse</div>
<div class="t b" style="left:51px;top:100px;letter-spacing:0.3px">Web / Voice</div>
<div class="t b" style="left:20px;top:475px;letter-spacing:0.47px">Preferences/Schedule</div>
<div class="t b" style="left:29px;top:500px;letter-spacing:0.3px">Filter / Fast Tracker</div>
<div class="t b" style="left:63px;top:525px;letter-spacing:0.6px">Report</div>

<svg class="a" style="left:0;top:0" width="150" height="330">
<!-- web log: clock -->
<path d="M59 172 L74 172 L79 176 L80 183 L79 190 L74 195 L59 195 L55 191 L54 183 L55 176Z" fill="#5A5ACA"/>
<path d="M58.5 173 L63 172.5 L58 176 L56.5 183 L58 190 L62 194.5 L58.5 194 L55.5 190.5 L55 183 L56 176Z" fill="#8C8CEC"/>
<path d="M57.5 183 L58.5 176.5 L62.5 173" stroke="#FFFFFF" stroke-width="0.8" fill="none"/>
<ellipse cx="69.3" cy="183.3" rx="10.3" ry="11.2" fill="#2424A0"/>
<ellipse cx="70" cy="183.3" rx="9.5" ry="10.5" fill="#EAEAE4"/>
<path d="M61.5 180 Q61 186 63 190" stroke="#C8C8D8" stroke-width="1" fill="none"/>
<g fill="#3A3AB8">
<rect x="65" y="175" width="1.5" height="1.5"/><rect x="69.5" y="174" width="2" height="2"/><rect x="74" y="176" width="1.5" height="1.5"/>
<rect x="77" y="179" width="1.5" height="1.5"/><rect x="78" y="183" width="1.5" height="1.5"/><rect x="61.5" y="179" width="1.5" height="1.5"/><rect x="61.5" y="183.5" width="1.5" height="1.5"/><rect x="62.5" y="188" width="1.5" height="1.5"/>
</g>
<path d="M66 178.3 L70.5 183" stroke="#FF7A00" stroke-width="2"/>
<path d="M68 180.5 L70.5 183" stroke="#FFC000" stroke-width="1"/>
<rect x="69.5" y="182.5" width="2" height="2.5" fill="#6A5000"/>
<!-- globe -->
<circle cx="76" cy="194.6" r="10" fill="#5C5CD0"/>
<circle cx="75.2" cy="194" r="8.8" fill="#7474E0"/>
<ellipse cx="72.5" cy="194.5" rx="5" ry="4" fill="#9494F0"/>
<path d="M73 187.5 L76.5 186 L80.5 187 L84 189.5 L85 193.5 L83.5 197 L81.5 198.5 L80.5 195.5 L78.5 192.5 L76.5 191 L74 189.5Z" fill="#F0A000"/>
<path d="M78 188 L82 189 L83 193 L81 195 L79.5 191Z" fill="#F8C030"/>
<path d="M69 199 L71.5 199.5 L71 202 L69.5 201Z" fill="#E08000"/>
<path d="M72 188 L74 186" stroke="#D06000" stroke-width="1"/>
<!-- voice log selection frame -->
<rect x="48" y="274" width="44" height="2" fill="#CBC7B4"/>
<rect x="48" y="274" width="2" height="36" fill="#CBC7B4"/>
<rect x="90" y="276" width="2" height="34" fill="#FCFBF4"/>
<rect x="50" y="308" width="42" height="2" fill="#FCFBF4"/>
<rect x="50.5" y="276.5" width="39" height="31" fill="#939393" stroke="#fff" stroke-width="1" shape-rendering="crispEdges"/>
<rect x="50.5" y="276.5" width="39" height="31" fill="none" stroke="#000" stroke-width="1" stroke-dasharray="1 1" shape-rendering="crispEdges"/>
<!-- phone -->
<path d="M54 285.5 L56.5 283 L60.5 281 L65 280 L69 279.8 L72 281 L75.5 283.5 L76 287 L79.5 290.5 L84 291.5 L84.6 294 L80 297 L74.5 300 L70 301.5 L65.5 303.5 L56 305.5 L54.3 303.5 L56 301.5 L62.5 300.8 L58 297.5 L54.2 293.5 L53.8 289Z" fill="#6464D4" stroke="#1A1A9A" stroke-width="1.2"/>
<path d="M72 281.5 L75 284 L74 287 L69 285 L64 282.5Z" fill="#8A8AEA"/>
<path d="M56 286.5 Q63 283.5 69 288 L73.5 294.5" stroke="#E4E4FF" stroke-width="2" fill="none"/>
<path d="M57 289.5 L67.5 297.5" stroke="#0A0A40" stroke-width="1.6"/>
<path d="M60.5 289.5 L69 296" stroke="#50508A" stroke-width="1"/>
<path d="M55.5 291.5 L64.5 298.5" stroke="#B4B4F4" stroke-width="1.5"/>
<path d="M56 304 L66 302.3" stroke="#fff" stroke-width="1.4"/>
<path d="M73 297.5 L83.5 292.5" stroke="#A8A8F4" stroke-width="1"/>
<path d="M75 295.5 L82 292" stroke="#2020A0" stroke-width="1"/>
<path d="M68.5 283 L71.5 283.5" stroke="#E8D870" stroke-width="1.5"/>
<path d="M73 286 L75 288 M74 289.5 L76 291" stroke="#101050" stroke-width="1"/>
<!-- red arrow -->
<path d="M79.5 277.2 L84.3 282.6 L81.6 282.6 L81.6 286.6 L84.3 286.6 L79.5 292 L74.7 286.6 L77.4 286.6 L77.4 282.6 L74.7 282.6Z" fill="#D40000" stroke="#fff" stroke-width="1.1"/>
<path d="M80.5 283 L80.5 286.5" stroke="#880000" stroke-width="1"/>
</svg>

<div class="t" style="left:49px;top:208px">Web Log</div>
<div class="t" style="left:44px;top:312px;letter-spacing:0.12px">Voice Log</div>

<!-- RIGHT PANEL -->
<div class="etch" style="left:156px;top:69px;width:459px;height:476px"></div>

<!-- Log Type -->
<div class="etch" style="left:166px;top:81px;width:439px;height:85px"></div>
<div class="lbl b" style="left:172px;top:74px;padding:0 3px 0 0;letter-spacing:0.6px">Log Type:</div>
<div class="cb" style="left:176px;top:90px"><svg width="7" height="7" viewBox="0 0 7 7"><path d="M0 2h1v1h1v1h1v-1h1v-1h1v-1h1v-1h1v3h-1v1h-1v1h-1v1h-1v1h-1v-1h-1v-1h-1v-1h-1z" fill="#21A121"/></svg></div>
<div class="t" style="left:195px;top:89px;letter-spacing:-0.11px">Process Multiple Input Files (Folder Contents)</div>

<div class="etch" style="left:173px;top:119px;width:415px;height:39px"></div>
<div class="lbl" style="left:178px;top:112px;padding:0 4px 0 1px;letter-spacing:-0.15px">Input Files Folder Location</div>
<div class="a" style="left:179px;top:130px;width:329px;height:17px;border:1px solid #7F9DB9;background:#fff"></div>
<div class="btn" style="left:513px;top:131px;width:68px;height:15px;box-shadow:inset 0 0 0 1px #B4CDF6,inset 0 -2px 0 #5B86E0"></div>
<div class="t" style="left:522px;top:131px;letter-spacing:0.5px">Browse...</div>

<!-- Voice Log -->
<div class="etch" style="left:166px;top:178px;width:439px;height:327px"></div>
<div class="lbl b" style="left:173px;top:171px;padding:0 3px;letter-spacing:0.5px">Voice Log</div>

<!-- Analysis -->
<div class="etch" style="left:198px;top:228px;width:374px;height:227px"></div>
<div class="lbl" style="left:205px;top:221px;padding:0 4px 0 3px">Analysis</div>

<div class="cb" style="left:253px;top:273px"><svg width="7" height="7" viewBox="0 0 7 7"><path d="M0 2h1v1h1v1h1v-1h1v-1h1v-1h1v-1h1v3h-1v1h-1v1h-1v1h-1v1h-1v-1h-1v-1h-1v-1h-1z" fill="#21A121"/></svg></div>
<div class="t" style="left:272px;letter-spacing:-0.17px;top:272px">Inbound Calls</div>
<div class="cb" style="left:405px;top:273px"><svg width="7" height="7" viewBox="0 0 7 7"><path d="M0 2h1v1h1v1h1v-1h1v-1h1v-1h1v-1h1v3h-1v1h-1v1h-1v1h-1v1h-1v-1h-1v-1h-1v-1h-1z" fill="#21A121"/></svg></div>
<div class="t" style="left:424px;letter-spacing:-0.17px;top:272px">Outbound Calls</div>
<div class="cb" style="left:253px;top:321px"><svg width="7" height="7" viewBox="0 0 7 7"><path d="M0 2h1v1h1v1h1v-1h1v-1h1v-1h1v-1h1v3h-1v1h-1v1h-1v1h-1v1h-1v-1h-1v-1h-1v-1h-1z" fill="#21A121"/></svg></div>
<div class="t" style="left:272px;letter-spacing:-0.17px;top:320px">Inbound Channels</div>
<div class="cb" style="left:405px;top:321px"><svg width="7" height="7" viewBox="0 0 7 7"><path d="M0 2h1v1h1v1h1v-1h1v-1h1v-1h1v-1h1v3h-1v1h-1v1h-1v1h-1v1h-1v-1h-1v-1h-1v-1h-1z" fill="#21A121"/></svg></div>
<div class="t" style="left:424px;letter-spacing:-0.17px;top:320px">Outbound Channels</div>
<div class="cb" style="left:253px;top:369px"><svg width="7" height="7" viewBox="0 0 7 7"><path d="M0 2h1v1h1v1h1v-1h1v-1h1v-1h1v-1h1v3h-1v1h-1v1h-1v1h-1v1h-1v-1h-1v-1h-1v-1h-1z" fill="#21A121"/></svg></div>
<div class="t" style="left:272px;letter-spacing:-0.17px;top:368px">User Details</div>
<div class="cb" style="left:405px;top:369px"><svg width="7" height="7" viewBox="0 0 7 7"><path d="M0 2h1v1h1v1h1v-1h1v-1h1v-1h1v-1h1v3h-1v1h-1v1h-1v1h-1v1h-1v-1h-1v-1h-1v-1h-1z" fill="#21A121"/></svg></div>
<div class="t" style="left:424px;letter-spacing:-0.17px;top:368px">User DNs</div>

<div class="btn" style="left:371px;top:421px;width:78px;height:18px;padding-top:2px"><span style="display:inline-block;will-change:transform;position:relative;left:-1px">Select All</span></div>
<div class="btn" style="left:452px;top:421px;width:78px;height:18px;padding-top:2px"><span style="display:inline-block;will-change:transform;position:relative;left:-1px">Clear All</span></div>

<div class="btn" style="left:253px;top:514px;width:98px;height:21px;padding-top:3px"><span style="display:inline-block;will-change:transform;position:relative;left:-1px">OK</span></div>
<div class="btn" style="left:354px;top:514px;width:98px;height:21px;padding-top:3px"><span style="display:inline-block;will-change:transform">Apply</span></div>
<div class="btn" style="left:456px;top:514px;width:98px;height:21px;padding-top:3px"><span style="display:inline-block;will-change:transform;position:relative;left:-1px">Cancel</span></div>

<!-- status bar -->
<div class="a" style="left:3px;top:553px;width:614px;height:1px;background:#ACA899"></div>
<div class="a" style="left:3px;top:554px;width:614px;height:1px;background:#fff"></div>
<div class="t" style="left:8px;top:557px;letter-spacing:0.25px">Voice Log</div>
</body></html>
